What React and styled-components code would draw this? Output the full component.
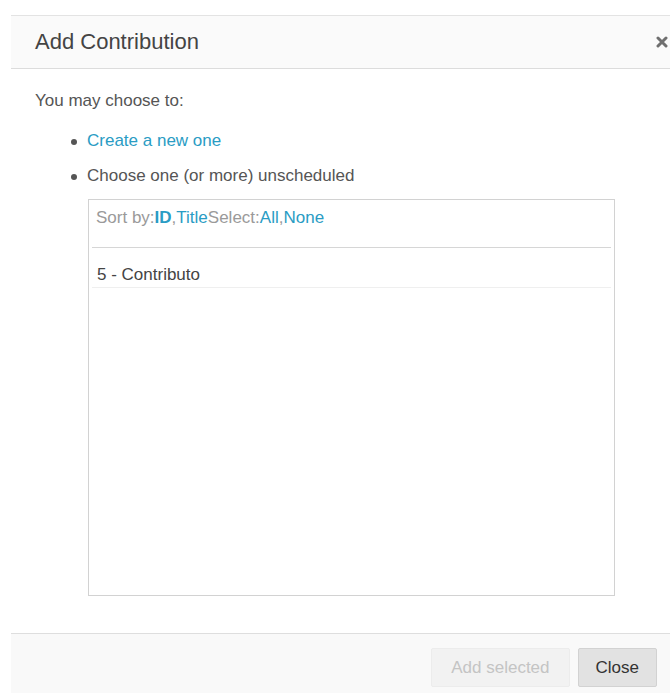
import React from 'react';
import styled, { createGlobalStyle } from 'styled-components';

const GlobalStyle = createGlobalStyle`
  html, body {
    margin: 0;
    padding: 0;
    background: #ffffff;
    overflow: hidden;
  }
  body {
    font-family: "Liberation Sans", Arial, sans-serif;
    color: #555555;
  }
`;

const Page = styled.div`
  padding: 15px 0 0 11px;
`;

const Modal = styled.div`
  width: 680px;
  border-top: 1px solid #e3e3e3;
  background: #ffffff;
`;

const Header = styled.div`
  display: flex;
  align-items: center;
  justify-content: space-between;
  height: 52px;
  padding: 0 23px 0 24px;
  background: #fafafa;
  border-bottom: 1px solid #dcdcdc;
`;

const Title = styled.h4`
  margin: 0;
  font-size: 22px;
  font-weight: normal;
  color: #444444;
`;

const CloseX = styled.button`
  display: flex;
  padding: 0;
  border: none;
  background: none;
  cursor: pointer;
`;

const Body = styled.div`
  padding: 20px 24px 37px;
  font-size: 17px;
  line-height: 24px;
`;

const Intro = styled.p`
  margin: 0 0 16px;
`;

const Options = styled.ul`
  margin: 0;
  padding: 0 0 0 52px;
  list-style: none;
`;

const Option = styled.li`
  position: relative;
  margin-bottom: 11px;

  &::before {
    content: '';
    position: absolute;
    left: -16px;
    top: 10px;
    width: 6px;
    height: 6px;
    border-radius: 50%;
    background: #555555;
  }
`;

const Link = styled.a`
  color: #2a9cc4;
  text-decoration: none;
  font-weight: ${(p) => (p.$bold ? 'bold' : 'normal')};
  cursor: pointer;
`;

const Picker = styled.div`
  box-sizing: border-box;
  width: 527px;
  height: 397px;
  margin-left: 1px;
  padding: 3px;
  border: 1px solid #d2d2d2;
`;

const Toolbar = styled.div`
  padding: 3px 4px 17px;
  border-bottom: 1px solid #d6d6d6;
  color: #9a9a9a;
`;

const Row = styled.div`
  padding: 15px 5px 0;
  border-bottom: 1px solid #efefef;
  color: #444444;
`;

const Footer = styled.div`
  display: flex;
  justify-content: flex-end;
  gap: 8px;
  padding: 14px 34px 20px;
  background: #f9f9f9;
  border-top: 1px solid #dedede;
`;

const Button = styled.button`
  height: 39px;
  padding: 0 ${(p) => (p.disabled ? 19 : 17)}px;
  font-family: inherit;
  font-size: 17px;
  border-radius: 2px;
  border: 1px solid ${(p) => (p.disabled ? '#ececec' : '#d2d2d2')};
  background: ${(p) => (p.disabled ? '#f2f2f2' : '#e2e2e2')};
  color: ${(p) => (p.disabled ? '#c4c4c4' : '#333333')};
  cursor: ${(p) => (p.disabled ? 'default' : 'pointer')};
`;

function TimesIcon() {
  return (
    <svg width="12" height="12" viewBox="0 0 12 12">
      <path d="M2 2 L10 10 M10 2 L2 10" stroke="#6f6f6f" strokeWidth="3" strokeLinecap="round" />
    </svg>
  );
}

export default function App() {
  return (
    <>
      <GlobalStyle />
      <Page>
        <Modal>
          <Header>
            <Title>Add Contribution</Title>
            <CloseX aria-label="Close">
              <TimesIcon />
            </CloseX>
          </Header>
          <Body>
            <Intro>You may choose to:</Intro>
            <Options>
              <Option>
                <Link>Create a new one</Link>
              </Option>
              <Option>Choose one (or more) unscheduled</Option>
            </Options>
            <Options as="div">
              <Picker>
                <Toolbar>
                  Sort by:<Link $bold>ID</Link>,<Link>Title</Link>Select:<Link>All</Link>,<Link>None</Link>
                </Toolbar>
                <Row>5 - Contributo</Row>
              </Picker>
            </Options>
          </Body>
          <Footer>
            <Button disabled>Add selected</Button>
            <Button>Close</Button>
          </Footer>
        </Modal>
      </Page>
    </>
  );
}
